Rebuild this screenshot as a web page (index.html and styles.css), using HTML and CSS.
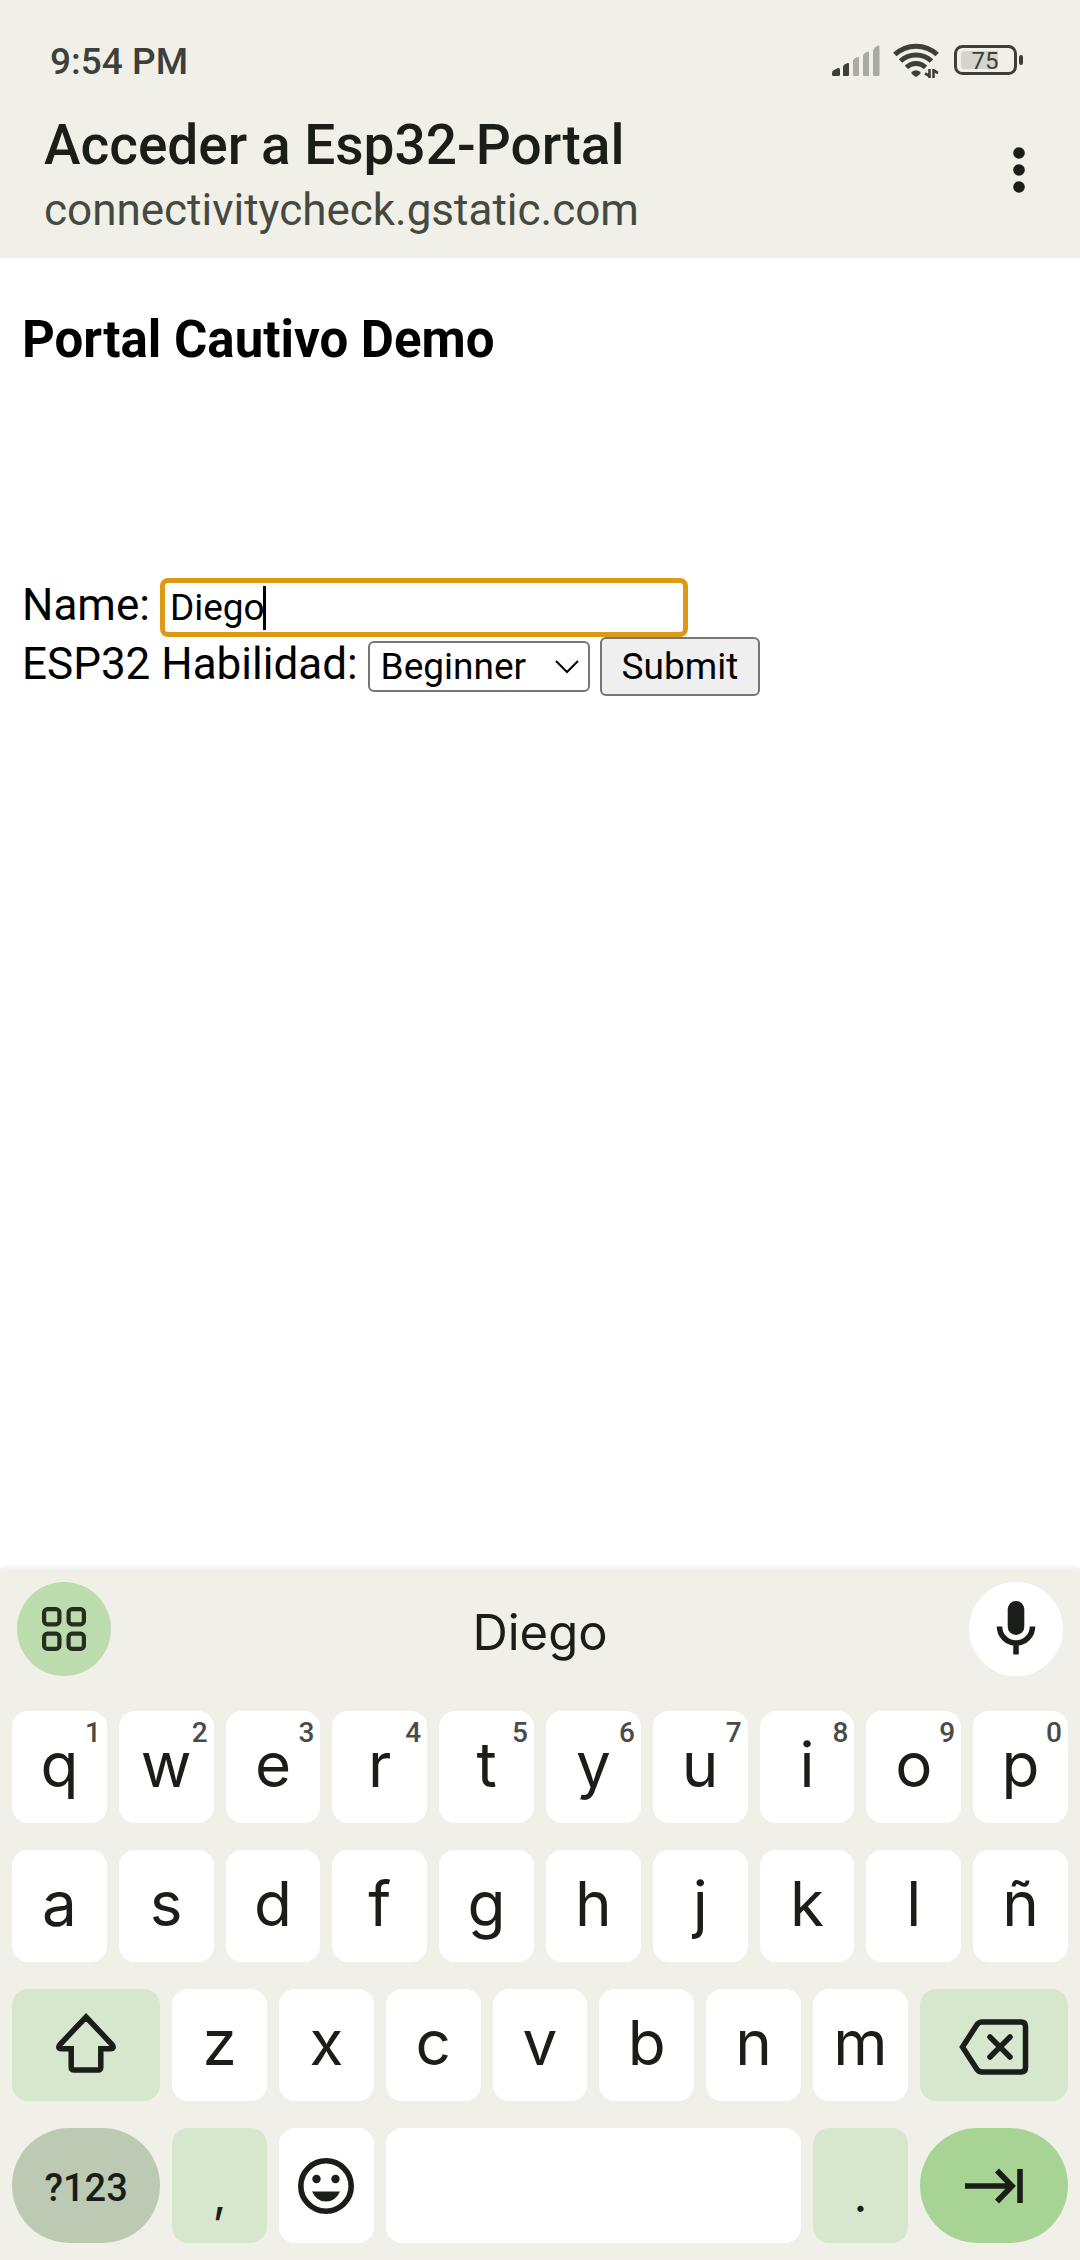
FILE: index.html
```html
<!DOCTYPE html>
<html lang="es">
<head>
<meta charset="utf-8">
<meta name="viewport" content="width=device-width, initial-scale=1">
<title>Acceder a Esp32-Portal</title>
<link rel="stylesheet" href="styles.css">
</head>
<body>
<header class="top">
  <div class="status">
    <span class="clock">9:54 PM</span>
    <div class="status-icons">
      <svg width="48" height="40" viewBox="0 0 48 40" aria-hidden="true">
        <g fill="#3e3f3a">
          <path d="M0 32.500V31Q0 29 2 28L6 26Q8 25.500 8 27.500V32.500Q8 34 6.500 34H1.500Q0 34 0 32.500Z"/>
          <path d="M11 33V25Q11 23.500 12.500 22.500L15.500 21Q17 20.500 17 22V33Q17 34 16 34H12Q11 34 11 33Z"/>
        </g>
        <g fill="#a9aaa4">
          <path d="M21 33V19Q21 17.500 22.500 16.500L25.500 15Q27 14.500 27 16V33Q27 34 26 34H22Q21 34 21 33Z"/>
          <path d="M31 33V14Q31 12.500 32.500 11.500L35.500 9.500Q37 9 37 10.500V33Q37 34 36 34H32Q31 34 31 33Z"/>
          <path d="M41 33V9Q41 7.500 42.500 6L45.500 3.800Q47.500 3 47.500 5V33Q47.500 34 46.500 34H42Q41 34 41 33Z"/>
        </g>
      </svg>
      <svg width="48" height="40" viewBox="0 0 48 40" aria-hidden="true">
        <g fill="none" stroke="#3e3f3a" stroke-width="5">
          <path d="M1.800 12.500Q11 4.200 23 4.200T44.200 12.500"/>
          <path d="M7.500 19Q14 13 23 13T38.500 19"/>
          <path d="M13.500 25.500Q17.500 21.500 23 21.500T32.500 25.500"/>
        </g>
        <path d="M18.500 30Q23 26.500 27.500 30Q28 31.500 26.500 32.500L24 34.500Q23 35 22 34.500L19.500 32.500Q18 31.500 18.500 30Z" fill="#3e3f3a"/>
        <path d="M36.500 27V36M36.500 34L32 31.500M40.500 36V27M40.500 28.500L45 31" fill="none" stroke="#3e3f3a" stroke-width="2.600"/>
      </svg>
      <svg width="70" height="40" viewBox="0 0 70 40" role="img" aria-label="Batería 75">
        <path d="M11 9H44V27H11Q7 27 7 23V13Q7 9 11 9Z" fill="#d4d5cf"/>
        <rect x="1.500" y="4.500" width="60" height="27" rx="7" fill="none" stroke="#3e3f3a" stroke-width="3"/>
        <rect x="65" y="13" width="4" height="10" rx="2" fill="#3e3f3a"/>
        <text class="battery-level" x="31" y="27" text-anchor="middle">75</text>
      </svg>
    </div>
  </div>
  <div class="site">
    <div class="site-text">
      <h1 class="site-title">Acceder a Esp32-Portal</h1>
      <p class="site-host">connectivitycheck.gstatic.com</p>
    </div>
    <button class="menu" type="button" aria-label="Más opciones">
      <svg width="12" height="46" viewBox="0 0 12 46" fill="#1b1d18"><circle cx="6" cy="6" r="5.800"/><circle cx="6" cy="23" r="5.800"/><circle cx="6" cy="40" r="5.800"/></svg>
    </button>
  </div>
</header>

<main class="portal">
  <h2 class="portal-title">Portal Cautivo Demo</h2>
  <form class="portal-form">
    <div class="row">
      <label for="name">Name:</label>
      <span class="field">
        <input class="name" id="name" type="text" value="Diego">
        <span class="caret"></span>
      </span>
    </div>
    <div class="row">
      <label for="skill">ESP32 Habilidad:</label>
      <span class="field">
        <select class="skill" id="skill"><option>Beginner</option></select>
        <svg class="chevron" width="24" height="14" viewBox="0 0 24 14" fill="none" stroke="#000" stroke-width="2"><path d="M1 1L12 12L23 1"/></svg>
      </span>
      <button class="submit" type="button">Submit</button>
    </div>
  </form>
</main>

<section class="keyboard" aria-label="Teclado">
  <div class="suggestions">
    <button class="round apps" type="button" aria-label="Herramientas">
      <svg width="44" height="44" viewBox="0 0 44 44" fill="none" stroke="#242d20" stroke-width="4.200"><rect x="2.100" y="2.100" width="15.300" height="15.300" rx="3.500"/><rect x="26.600" y="2.100" width="15.300" height="15.300" rx="3.500"/><rect x="2.100" y="26.600" width="15.300" height="15.300" rx="3.500"/><rect x="26.600" y="26.600" width="15.300" height="15.300" rx="3.500"/></svg>
    </button>
    <button class="word" type="button">Diego</button>
    <button class="round mic" type="button" aria-label="Dictado">
      <svg width="40" height="56" viewBox="0 0 40 56"><rect x="11.700" y="0" width="16.600" height="34" rx="8.300" fill="#1b1d18"/><path d="M3.500 25.500C3.500 35 11 42 20 42S36.500 35 36.500 25.500M20 42V53.500" fill="none" stroke="#1b1d18" stroke-width="5.500"/></svg>
    </button>
  </div>
  <div class="keys">
    <button class="key" type="button">q<sup class="hint">1</sup></button>
    <button class="key" type="button">w<sup class="hint">2</sup></button>
    <button class="key" type="button">e<sup class="hint">3</sup></button>
    <button class="key" type="button">r<sup class="hint">4</sup></button>
    <button class="key" type="button">t<sup class="hint">5</sup></button>
    <button class="key" type="button">y<sup class="hint">6</sup></button>
    <button class="key" type="button">u<sup class="hint">7</sup></button>
    <button class="key" type="button">i<sup class="hint">8</sup></button>
    <button class="key" type="button">o<sup class="hint">9</sup></button>
    <button class="key" type="button">p<sup class="hint">0</sup></button>

    <button class="key" type="button">a</button>
    <button class="key" type="button">s</button>
    <button class="key" type="button">d</button>
    <button class="key" type="button">f</button>
    <button class="key" type="button">g</button>
    <button class="key" type="button">h</button>
    <button class="key" type="button">j</button>
    <button class="key" type="button">k</button>
    <button class="key" type="button">l</button>
    <button class="key" type="button">ñ</button>

    <button class="key wide soft" type="button" aria-label="Mayúsculas">
      <svg width="62" height="60" viewBox="0 0 62 60" fill="none" stroke="#1b1d18" stroke-width="5.500"><path d="M31 4L57 31.500Q60 35.500 55.500 35.700H45.800V54Q45.800 57 42.800 57H19.200Q16.200 57 16.200 54V35.700H6.500Q2 35.500 5 31.500Z"/></svg>
    </button>
    <button class="key" type="button">z</button>
    <button class="key" type="button">x</button>
    <button class="key" type="button">c</button>
    <button class="key" type="button">v</button>
    <button class="key" type="button">b</button>
    <button class="key" type="button">n</button>
    <button class="key" type="button">m</button>
    <button class="key wide soft delete" type="button" aria-label="Borrar">
      <svg width="70" height="56" viewBox="0 0 70 56" fill="none" stroke="#1b1d18" stroke-width="5.500"><path d="M3.500 28L18 5.500Q20 3 23 3H62Q66.500 3 66.500 7.500V48.500Q66.500 53 62 53H23Q20 53 18 50.500Z"/><path d="M31 18L51 38M51 18L31 38" stroke-linecap="round"/></svg>
    </button>

    <button class="key wide last pill symbols" type="button">?123</button>
    <button class="key last soft punct" type="button">,</button>
    <button class="key last" type="button" aria-label="Emojis">
      <svg width="56" height="56" viewBox="0 0 56 56"><circle cx="28" cy="28" r="25.200" fill="none" stroke="#1b1d18" stroke-width="5.600"/><g fill="#1b1d18"><circle cx="18.500" cy="21" r="4.200"/><circle cx="37.500" cy="21" r="4.200"/><path d="M14 33.500H42Q37.500 43.500 28 43.500T14 33.500Z"/></g></svg>
    </button>
    <button class="key space last" type="button" aria-label="Espacio"></button>
    <button class="key last soft punct" type="button">.</button>
    <button class="key wide last pill next" type="button" aria-label="Siguiente">
      <svg width="60" height="36" viewBox="0 0 60 36" fill="none" stroke="#1b1d18" stroke-width="5.600"><path d="M1 18H47M33 2.500L48 18L33 33.500M56 1V35"/></svg>
    </button>
  </div>
</section>
</body>
</html>
```
FILE: styles.css
```css
* { box-sizing: border-box; }

body {
  margin: 0;
  min-height: 100vh;
  display: flex;
  flex-direction: column;
  background: #fff;
  color: #000;
  font-family: Roboto, "Liberation Sans", sans-serif;
}

button, input, select { margin: 0; font-family: inherit; color: inherit; }
h1, h2, p { margin: 0; }
svg { display: block; flex: none; }

.top { padding-bottom: 22px; background: #f0f0e8; }

.status {
  display: flex;
  justify-content: space-between;
  padding: 42px 56px 0 50px;
}
.clock { font-size: 37px; font-weight: 500; line-height: 40px; color: #3e3f3a; }
.status-icons { display: flex; gap: 13px; }
.battery-level { font: 400 24px Roboto, sans-serif; fill: #3e3f3a; }

.site {
  display: flex;
  justify-content: space-between;
  align-items: flex-start;
  padding: 31px 44px 0;
}
.site-title { font-size: 55px; font-weight: 500; line-height: 64px; color: #1b1d18; }
.site-host { margin-top: 7px; font-size: 44px; line-height: 52px; color: #464941; }
.menu {
  display: flex;
  align-items: center;
  justify-content: center;
  width: 34px;
  height: 114px;
  padding: 0;
  border: 0;
  background: none;
}

.portal { flex: 1; padding: 52px 22px; }
.portal-title { font-size: 51px; line-height: 60px; font-weight: 700; }
.portal-form { margin-top: 208px; font-size: 44px; }
.row { display: flex; align-items: baseline; gap: 10px; line-height: 52px; }
.field { position: relative; display: block; }

.name {
  display: block;
  width: 528px;
  height: 59px;
  padding: 0 5px;
  border: 5px solid #dd9a17;
  border-radius: 8px;
  background: #fff;
  font-size: 37px;
  outline: 0;
}
.caret {
  position: absolute;
  left: 103px;
  top: 8px;
  width: 3px;
  height: 44px;
  background: #000;
}
.skill {
  display: block;
  height: 51px;
  padding: 0 61px 0 11px;
  border: 2px solid #767676;
  border-radius: 6px;
  background: #fff;
  font-size: 37px;
  appearance: none;
}
.chevron { position: absolute; right: 11px; top: 19px; pointer-events: none; }
.submit {
  height: 59px;
  padding: 0 20px;
  border: 2px solid #767676;
  border-radius: 6px;
  background: #efefef;
  font-size: 37px;
}

.keyboard {
  padding: 13px 12px 17px;
  background: #f0f0e8;
  box-shadow: 0 0 6px rgba(0, 0, 0, 0.12);
  color: #1b1d18;
}
.suggestions {
  display: flex;
  justify-content: space-between;
  align-items: center;
  padding: 0 5px;
}
.round {
  display: flex;
  align-items: center;
  justify-content: center;
  width: 94px;
  height: 94px;
  padding: 0;
  border: 0;
  border-radius: 50%;
}
.apps { background: #bddcad; }
.mic { background: #fff; }
.word {
  padding: 6px 24px 0;
  border: 0;
  background: none;
  font-family: Inter, Roboto, sans-serif;
  font-size: 49px;
}

.keys {
  display: grid;
  grid-template-columns: repeat(20, 1fr);
  gap: 27px 12px;
  padding-top: 35px;
}
.key {
  position: relative;
  display: flex;
  grid-column: span 2;
  align-items: center;
  justify-content: center;
  height: 112px;
  padding: 0 0 4px;
  border: 0;
  border-radius: 16px;
  background: #fff;
  font-family: Inter, Roboto, sans-serif;
  font-size: 62px;
  line-height: 76px;
}
.hint {
  position: absolute;
  top: 5px;
  right: 6px;
  font: 500 28px/34px Roboto, sans-serif;
  color: #4a4a48;
}
.wide { grid-column: span 3; }
.space { grid-column: span 8; }
.last { height: 115px; padding: 0; }
.delete { padding: 4px 0 0; }
.soft { background: #d7e7cd; }
.pill { border-radius: 58px; }
.symbols { padding: 4px 0 0; background: #bdcab3; font: 500 38px Roboto, sans-serif; }
.next { background: #a7d494; }
.punct { align-items: flex-end; font-size: 48px; line-height: 60px; padding-bottom: 18px; }
```
